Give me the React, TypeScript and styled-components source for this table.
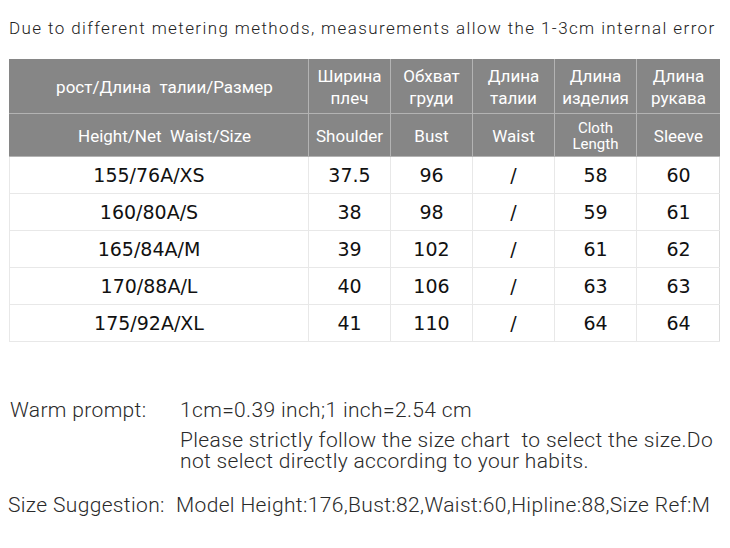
import styled, { createGlobalStyle } from 'styled-components';

const GlobalStyle = createGlobalStyle`
	html, body {
		margin: 0;
		padding: 0;
		background: #ffffff;
	}
	* {
		box-sizing: border-box;
	}
`;

const Page = styled.div`
	width: 730px;
	height: 548px;
	overflow: hidden;
	background: #fff;
	font-family: Roboto, 'Liberation Sans', sans-serif;
`;

const Note = styled.p`
	margin: 0;
	height: 59px;
	padding: 17px 0 0 9px;
	font-size: 17px;
	line-height: 22px;
	letter-spacing: 1.4px;
	color: #222;
	font-weight: 300;
	white-space: nowrap;
`;

const Chart = styled.div<{ $rows: string }>`
	margin-left: 9px;
	width: 711px;
	display: grid;
	grid-template-columns: 300px 82px 82px 82px 82px 83px;
	grid-template-rows: ${(p) => p.$rows};
	border-right: 1px solid #dcdcdc;
`;

const HeadCell = styled.div<{ $small?: boolean }>`
	display: flex;
	align-items: center;
	justify-content: center;
	text-align: center;
	white-space: pre;
	background: #868686;
	color: #fff;
	font-size: ${(p) => (p.$small ? '15px' : '17px')};
	line-height: ${(p) => (p.$small ? '16px' : '22px')};
	border-right: 1px solid #b3b3b3;
	border-bottom: 1px solid #b3b3b3;
	padding-top: 2px;

	&:nth-child(6n + 1) {
		padding-left: 12px;
	}
	&:nth-child(6n) {
		border-right: none;
	}
`;

const Cell = styled.div`
	display: flex;
	align-items: center;
	justify-content: center;
	font-family: 'DejaVu Sans', sans-serif;
	font-size: 19px;
	color: #111;
	border-right: 1px solid #e8e8e8;
	border-bottom: 1px solid #e8e8e8;

	&:nth-child(6n + 1) {
		border-left: 1px solid #e8e8e8;
		padding-right: 20px;
	}
	&:nth-child(6n) {
		border-right: none;
	}
`;

const Info = styled.div`
	margin-top: 57px;
	color: #2a2a2a;
	font-size: 21px;
	font-weight: 300;
	letter-spacing: 0.35px;
`;

const InfoRow = styled.div<{ $labelWidth: number; $left: number }>`
	display: flex;
	padding-left: ${(p) => p.$left}px;
	line-height: 22px;

	& > span:first-child {
		flex: 0 0 ${(p) => p.$labelWidth}px;
		white-space: nowrap;
	}
`;

const Lines = styled.div`
	display: flex;
	flex-direction: column;
	gap: 9px;
`;

const Para = styled.p`
	margin: 0;
	width: 545px;
	line-height: 21px;
	white-space: pre-wrap;
`;

const Suggestion = styled(InfoRow)`
	margin-top: 22px;
`;

const headRu = ['рост/Длина  талии/Размер', 'Ширина\nплеч', 'Обхват\nгруди', 'Длина\nталии', 'Длина\nизделия', 'Длина\nрукава'];
const headEn = ['Height/Net  Waist/Size', 'Shoulder', 'Bust', 'Waist', 'Cloth\nLength', 'Sleeve'];

const rows = [
	['155/76A/XS', '37.5', '96', '/', '58', '60'],
	['160/80A/S', '38', '98', '/', '59', '61'],
	['165/84A/M', '39', '102', '/', '61', '62'],
	['170/88A/L', '40', '106', '/', '63', '63'],
	['175/92A/XL', '41', '110', '/', '64', '64'],
];

export default function App() {
	return (
		<Page>
			<GlobalStyle />
			<Note>Due to different metering methods, measurements allow the 1-3cm internal error</Note>

			<Chart $rows='55px 43px'>
				{headRu.map((h, i) => (
					<HeadCell key={'ru' + i}>{h}</HeadCell>
				))}
				{headEn.map((h, i) => (
					<HeadCell key={'en' + i} $small={h.includes('\n')}>
						{h}
					</HeadCell>
				))}
			</Chart>
			<Chart $rows='repeat(5, 37px)'>
				{rows.flatMap((r, ri) => r.map((v, ci) => <Cell key={ri + '-' + ci}>{v}</Cell>))}
			</Chart>

			<Info>
				<InfoRow $labelWidth={170} $left={10}>
					<span>Warm prompt:</span>
					<Lines>
						<span>1cm=0.39 inch;1 inch=2.54 cm</span>
						<Para>Please strictly follow the size chart  to select the size.Do not select directly according to your habits.</Para>
					</Lines>
				</InfoRow>
				<Suggestion $labelWidth={168} $left={8}>
					<span>Size Suggestion:</span>
					<span>Model Height:176,Bust:82,Waist:60,Hipline:88,Size Ref:M</span>
				</Suggestion>
			</Info>
		</Page>
	);
}
